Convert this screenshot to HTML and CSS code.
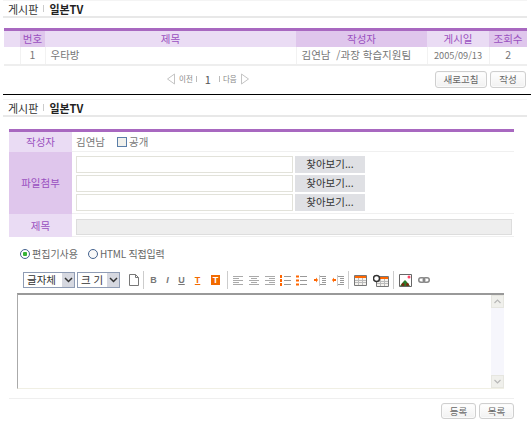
FILE: index.html
```html
<!DOCTYPE html>
<html lang="ko">
<head>
<meta charset="utf-8">
<title>게시판</title>
<link rel="stylesheet" href="styles.css">
</head>
<body>
<section class="list">
  <h1 class="crumb"><span class="crumb-sub">게시판</span><i class="crumb-bar"></i><b>일본TV</b></h1>
  <table class="grid">
    <thead>
      <tr>
        <th class="c-sp"></th><th class="c-no dark">번호</th><th class="c-title">제목</th><th class="c-au dark">작성자</th><th class="c-date">게시일</th><th class="c-view dark">조회수</th>
      </tr>
    </thead>
    <tbody>
      <tr><td></td><td class="ctr">1</td><td>우타방</td><td>김연남 &nbsp;/과장 학습지원팀</td><td class="ctr date">2005/09/13</td><td class="ctr">2</td></tr>
    </tbody>
  </table>
  <div class="list-foot">
    <div class="pager">
      <svg class="tri" width="10" height="12" viewBox="0 0 10 12"><path d="M8.500 1 1.500 6l7 5z" fill="#fff" stroke="#c4c4c4"/></svg>
      <span>이전</span><i class="pbar"></i><strong>1</strong><i class="pbar"></i><span>다음</span>
      <svg class="tri" width="10" height="12" viewBox="0 0 10 12"><path d="M1.500 1l7 5-7 5z" fill="#fff" stroke="#c4c4c4"/></svg>
    </div>
    <div class="btns">
      <button class="btn b-wide">새로고침</button><button class="btn b-mid">작성</button>
    </div>
  </div>
</section>

<section class="write">
  <h1 class="crumb"><span class="crumb-sub">게시판</span><i class="crumb-bar"></i><b>일본TV</b></h1>
  <div class="form-wrap">
    <div class="form">
      <div class="f-row r-author">
        <div class="f-label">작성자</div>
        <div class="f-body author"><span>김연남</span><i class="check"></i><span>공개</span></div>
      </div>
      <div class="f-row r-files">
        <div class="f-label dark">파일첨부</div>
        <div class="f-body files">
          <div class="file"><i class="input"></i><i class="browse">찾아보기...</i></div>
          <div class="file"><i class="input"></i><i class="browse">찾아보기...</i></div>
          <div class="file"><i class="input"></i><i class="browse">찾아보기...</i></div>
        </div>
      </div>
      <div class="f-row r-title">
        <div class="f-label">제목</div>
        <div class="f-body"><i class="title-input"></i></div>
      </div>
    </div>
    <div class="modes">
      <i class="radio on"></i><span class="m-edit">편집기사용</span>
      <i class="radio"></i><span class="m-html">HTML 직접입력</span>
    </div>
    <div class="toolbar">
      <div class="sel s-font"><span>글자체</span><i class="arrow"><svg width="9" height="6" viewBox="0 0 9 6"><path d="M1 1l3.500 3.500L8 1" fill="none" stroke="#333" stroke-width="1.500"/></svg></i></div>
      <div class="sel s-size"><span>크 기</span><i class="arrow"><svg width="9" height="6" viewBox="0 0 9 6"><path d="M1 1l3.500 3.500L8 1" fill="none" stroke="#333" stroke-width="1.500"/></svg></i></div>
      <svg class="ic doc" width="10" height="12" viewBox="0 0 10 12"><path d="M.500.500h6l3 3v8h-9z" fill="#fff" stroke="#777"/><path d="M6.500.500v3h3" fill="none" stroke="#777"/></svg>
      <i class="sep s1"></i>
      <span class="fmt f-b">B</span><span class="fmt f-i">I</span><span class="fmt f-u">U</span><span class="fmt f-t">T</span><span class="fmt f-tb">T</span>
      <i class="sep s2"></i>
      <svg class="ic" width="10" height="9" viewBox="0 0 10 9"><path d="M0 .500h10M0 2.500h6M0 4.500h10M0 6.500h6M0 8.500h10" stroke="#aaa"/></svg>
      <svg class="ic g6" width="10" height="9" viewBox="0 0 10 9"><path d="M0 .500h10M2 2.500h6M0 4.500h10M2 6.500h6M0 8.500h10" stroke="#aaa"/></svg>
      <svg class="ic g6" width="10" height="9" viewBox="0 0 10 9"><path d="M0 .500h10M4 2.500h6M0 4.500h10M4 6.500h6M0 8.500h10" stroke="#aaa"/></svg>
      <svg class="ic g5" width="11" height="11" viewBox="0 0 11 11"><path d="M4 1.500h7M4 5.500h7M4 9.500h7" stroke="#999"/><path d="M1 0v3M1 4v3M1 8v3" stroke="#f60" stroke-width="2"/></svg>
      <svg class="ic g5" width="11" height="11" viewBox="0 0 11 11"><path d="M4 1.500h7M4 5.500h7M4 9.500h7" stroke="#999"/><path d="M0 1.500h3M0 5.500h3M0 9.500h3" stroke="#f60" stroke-width="2"/></svg>
      <svg class="ic g7" width="12" height="11" viewBox="0 0 12 11"><path d="M6 1.500h6M8 3.500h4M8 5.500h4M8 7.500h4M6 9.500h6" stroke="#999"/><path d="M5.500 0v11" stroke="#ccc"/><path d="M0 4h2V2.500L4 5 2 7.500V6H0z" fill="#f60"/></svg>
      <svg class="ic g6" width="12" height="11" viewBox="0 0 12 11"><path d="M6 1.500h6M8 3.500h4M8 5.500h4M8 7.500h4M6 9.500h6" stroke="#999"/><path d="M5.500 0v11" stroke="#ccc"/><path d="M4 4H2V2.500L0 5l2 2.500V6h2z" fill="#f60"/></svg>
      <i class="sep s3"></i>
      <svg class="ic" width="13" height="11" viewBox="0 0 13 11"><path d="M.500.500h12v10H.500z" fill="#f4f2ee" stroke="#777"/><path d="M1 1h11v2H1z" fill="#f60"/><path d="M1 5.500h11M1 7.500h11M4.500 3v7M8.500 3v7" stroke="#bbb"/></svg>
      <svg class="ic g6" width="16" height="13" viewBox="0 0 16 13"><path d="M3.500 2.500h12v10h-12z" fill="#f4f2ee" stroke="#777"/><path d="M4 3h11v2H4z" fill="#f60"/><path d="M4 7.500h11M4 9.500h11M7.500 5v7M11.500 5v7" stroke="#bbb"/><circle cx="3.500" cy="4.500" r="3" fill="#fff" stroke="#333" stroke-width="1.500"/></svg>
      <i class="sep s4"></i>
      <svg class="ic" width="13" height="13" viewBox="0 0 13 13"><path d="M.500.500h12v12H.500z" fill="#fff" stroke="#666"/><path d="M1 12l3-4 2-2 2 2 3 4z" fill="#2a7a2a"/><circle cx="4" cy="10.500" r="1.500" fill="#7a2a10"/><circle cx="8.500" cy="10.500" r="1.500" fill="#7a2a10"/><circle cx="10" cy="3" r="1.500" fill="#f46"/></svg>
      <svg class="ic g6" width="12" height="6" viewBox="0 0 12 6"><rect x=".750" y=".750" width="6" height="4.500" rx="2.200" fill="none" stroke="#888" stroke-width="1.500"/><rect x="5.250" y=".750" width="6" height="4.500" rx="2.200" fill="none" stroke="#888" stroke-width="1.500"/></svg>
    </div>
    <div class="editor">
      <div class="scroll">
        <i class="sb-btn"><svg width="7" height="5" viewBox="0 0 7 5"><path d="M.500 4l3-3 3 3" fill="none" stroke="#b8b8b8" stroke-width="1.200"/></svg></i>
        <i class="sb-btn"><svg width="7" height="5" viewBox="0 0 7 5"><path d="M.500 1l3 3 3-3" fill="none" stroke="#b8b8b8" stroke-width="1.200"/></svg></i>
      </div>
    </div>
    <div class="form-foot">
      <button class="btn b-sm">등록</button><button class="btn b-sm">목록</button>
    </div>
  </div>
</section>
</body>
</html>
```
FILE: styles.css
```css
* { box-sizing: border-box; }
html, body { margin: 0; padding: 0; }
body {
  width: 531px;
  height: 421px;
  overflow: hidden;
  background: #fff;
  color: #777;
  font: 10px/12px "Noto Sans CJK KR", "Liberation Sans", sans-serif;
}
i { font-style: normal; display: block; }

.list { height: 95px; border-bottom: 1px solid #000; margin-left: 3px; }
.crumb {
  margin: 0 4px 0 0;
  height: 18px;
  border-top: 1px solid #f4f4f4;
  border-bottom: 2px solid #e8e8e8;
  display: flex;
  align-items: center;
  gap: 5px;
  padding-left: 5px;
  font-size: 11px;
  font-weight: 400;
  color: #222;
}
.crumb-sub { color: #333; }
.crumb-bar { width: 1px; height: 7px; background: #ccc; }
.crumb b { font-weight: 700; color: #222; }

.grid {
  border-collapse: collapse;
  table-layout: fixed;
  width: 523px;
  margin: 10px 0 0 1px;
  border-top: 3px solid #a868c0;
  border-bottom: 2px solid #eeeeee;
}
.grid th {
  height: 17px;
  padding: 0;
  background: #eadcf4;
  color: #9a50c0;
  font-weight: 400;
  font-size: 10.500px;
  text-align: center;
}
.grid th.dark { background: #dfc6ec; }
.grid td {
  height: 18px;
  padding: 0 0 0 5px;
  border-left: 1px solid #f2f2f2;
  font-size: 10.500px;
}
.grid td:first-child { border-left: 0; }
.grid td.ctr { text-align: center; padding: 0; }
.grid td.date { font-size: 9.200px; }
.c-sp { width: 16px; }
.c-no { width: 25px; }
.c-title { width: 251px; }
.c-au { width: 131px; }
.c-date { width: 62px; }
.c-view { width: 38px; }

.list-foot { position: relative; display: flex; justify-content: flex-end; padding: 5px 5px 0 0; }
.pager {
  position: absolute;
  left: 163px;
  top: 7px;
  display: flex;
  align-items: center;
  gap: 3px;
  font-size: 7.500px;
  color: #888;
}
.pager strong { font-size: 11px; font-weight: 400; color: #555; margin: 0 5px; }
.pbar { width: 1px; height: 6px; background: #bbb; }
.btns { display: flex; gap: 3px; }
.btn {
  padding: 0;
  height: 17px;
  border: 1px solid #cfcfcf;
  border-radius: 3px;
  background: linear-gradient(#fff, #f1f1f1);
  color: #666;
  font: 9.500px/12px "Noto Sans CJK KR", "Liberation Sans", sans-serif;
  box-shadow: inset 0 0 0 1px #fafafa;
}
.b-wide { width: 52px; }
.b-mid { width: 36px; }
.b-sm { width: 35px; }

.write { margin-left: 3px; padding-top: 4px; }
.form-wrap { width: 505px; margin: 12px 0 0 6px; }
.form { border-top: 3px solid #a868c0; }
.f-row { display: flex; }
.f-label {
  width: 63px;
  display: flex;
  align-items: center;
  justify-content: center;
  background: #eadcf4;
  color: #9a50c0;
  font-size: 10.500px;
}
.f-label.dark { background: #dfc6ec; }
.f-body { flex: 1; padding-left: 4px; border-bottom: 1px solid #f0f0f0; }
.r-author { height: 20px; }
.author { display: flex; align-items: center; gap: 2px; font-size: 10.500px; }
.check {
  width: 10px;
  height: 10px;
  margin-left: 10px;
  border: 1px solid #5a7ea8;
  background: #f1f1ec;
}
.r-files { height: 62px; }
.files { display: flex; flex-direction: column; gap: 2px; padding-top: 4px; }
.file { display: flex; gap: 2px; height: 17px; }
.input { width: 217px; border: 1px solid #e2e2da; background: #fff; }
.browse {
  width: 70px;
  background: #dfe0e4;
  color: #333;
  text-align: center;
  font-size: 10.500px;
  line-height: 16px;
}
.r-title { height: 23px; }
.r-title .f-body { padding-top: 5px; }
.title-input { width: 436px; height: 16px; background: #eeeeee; border: 1px solid #dddddd; }

.modes {
  display: flex;
  align-items: center;
  height: 12px;
  margin: 11px 0 0 11px;
  font-size: 10px;
  color: #666;
}
.radio {
  width: 10px;
  height: 10px;
  margin-right: 2px;
  border: 1px solid #44628e;
  border-radius: 50%;
  background: #f8f8f8;
}
.radio.on { background: radial-gradient(circle, #36b336 0 2px, #fff 2.500px); }
.m-edit { margin-right: 8px; width: 48px; }
.m-html { letter-spacing: -0.200px; }

.toolbar {
  display: flex;
  align-items: center;
  height: 16px;
  margin: 12px 0 0 14px;
}
.sel {
  display: flex;
  height: 16px;
  border: 1px solid #8f9cb4;
  background: #fff;
  color: #333;
  font-size: 10.500px;
  line-height: 13px;
}
.sel span { flex: 1; padding-left: 3px; white-space: pre; }
.s-font { width: 52px; }
.s-size { width: 43px; margin-left: 2px; }
.arrow {
  width: 12px;
  background: #d6d8e0;
  display: flex;
  align-items: center;
  justify-content: center;
}
.ic { display: block; flex: none; }
.g7 { margin-left: 7px; }
.g6 { margin-left: 6px; }
.g5 { margin-left: 5px; }
.doc { margin-left: 9px; }
.sep { width: 1px; height: 18px; background: #ccc; flex: none; }
.s1 { margin: 0 6px 0 4px; }
.s2 { margin: 0 5px 0 7px; }
.s3 { margin: 0 5px 0 4px; }
.s4 { margin: 0 5px 0 4px; }
.fmt {
  width: 7px;
  margin-right: 7px;
  text-align: center;
  font: 700 9px/10px "Liberation Sans", sans-serif;
  color: #777;
}
.f-i { font-style: italic; }
.f-u { text-decoration: underline; }
.f-t { color: #f26a00; text-decoration: underline; margin: 0 10px 0 2px; }
.f-tb { width: 9px; height: 10px; background: #f26a00; color: #fff; margin: 0; }

.editor {
  display: flex;
  justify-content: flex-end;
  width: 487px;
  height: 96px;
  margin: 5px 0 0 8px;
  border-top: 2px solid #999;
  border-left: 1px solid #aaa;
  border-bottom: 1px solid #f0efe4;
}
.scroll {
  width: 13px;
  background: #f6f6fc;
  display: flex;
  flex-direction: column;
  justify-content: space-between;
}
.sb-btn {
  height: 13px;
  background: #f0f0ec;
  border: 1px solid #e6e6e0;
  display: flex;
  align-items: center;
  justify-content: center;
}
.form-foot {
  display: flex;
  justify-content: flex-end;
  gap: 3px;
  margin-top: 9px;
  padding-top: 4px;
  border-top: 1px solid #efefef;
}
.form-foot .btn { height: 16px; width: 35px; }
```
